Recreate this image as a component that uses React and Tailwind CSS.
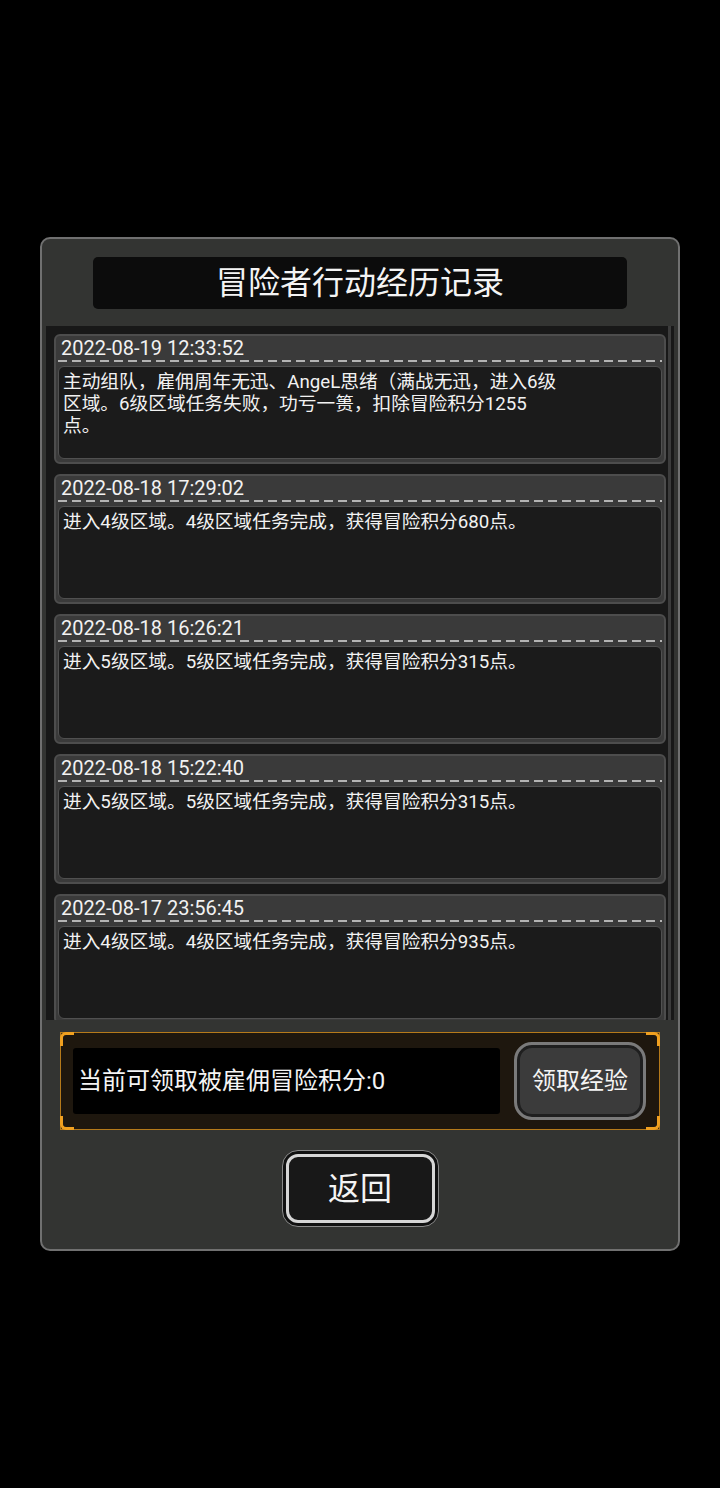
import React from "react";

const records = [
  {
    time: "2022-08-19 12:33:52",
    lines: [
      "主动组队，雇佣周年无迅、AngeL思绪（满战无迅，进入6级",
      "区域。6级区域任务失败，功亏一篑，扣除冒险积分1255",
      "点。",
    ],
  },
  { time: "2022-08-18 17:29:02", lines: ["进入4级区域。4级区域任务完成，获得冒险积分680点。"] },
  { time: "2022-08-18 16:26:21", lines: ["进入5级区域。5级区域任务完成，获得冒险积分315点。"] },
  { time: "2022-08-18 15:22:40", lines: ["进入5级区域。5级区域任务完成，获得冒险积分315点。"] },
  { time: "2022-08-17 23:56:45", lines: ["进入4级区域。4级区域任务完成，获得冒险积分935点。"] },
];

function RecordCard({ rec }) {
  return (
    <div className="shrink-0 h-[130px] rounded-[6px] border-2 border-[#4d4d4d] bg-[#3a3a3a] flex flex-col">
      <div className="h-[24px] pl-[5px] text-[20px] leading-[24px] text-[#f2f2f2]">{rec.time}</div>
      <div className="mx-[2px] h-[2px] bg-[repeating-linear-gradient(to_right,#b4b4b4_0_9px,transparent_9px_14px)]" />
      <div className="mt-[4px] mx-[2px] h-[93px] rounded-[6px] border border-[#505050] bg-[#1b1b1b] pl-[4px] pt-[4px] text-[18.7px] leading-[22px] text-[#f2f2f2]">
        {rec.lines.map((l, i) => (
          <div key={i} className="whitespace-nowrap">{l}</div>
        ))}
      </div>
    </div>
  );
}

function Corner({ pos }) {
  const cls = {
    tl: "top-[-1px] left-[-1px] border-l-[3px] border-t-[3px] rounded-tl-[6px]",
    tr: "top-[-1px] right-[-1px] border-r-[3px] border-t-[3px] rounded-tr-[6px]",
    bl: "bottom-[-1px] left-[-1px] border-l-[3px] border-b-[3px] rounded-bl-[6px]",
    br: "bottom-[-1px] right-[-1px] border-r-[3px] border-b-[3px] rounded-br-[6px]",
  }[pos];
  return <span className={"absolute w-[14px] h-[14px] border-[#f0a020] " + cls} />;
}

export default function App() {
  return (
    <div
      className="w-full h-[1488px] bg-black pt-[237px] px-[40px]"
      style={{ fontFamily: 'Roboto, "Noto Sans CJK SC", sans-serif' }}
    >
      <div className="h-[1014px] rounded-[10px] border-2 border-[#707070] bg-[#333432] flex flex-col">
        {/* title */}
        <div className="mt-[18px] mx-[51px] h-[52px] rounded-[5px] bg-[#0c0c0c] flex items-center justify-center text-[32px] text-[#f4f4f4]">
          冒险者行动经历记录
        </div>

        {/* record list */}
        <div className="mt-[17px] mx-[4px] h-[694px] bg-[#181818] overflow-hidden flex">
          <div className="flex-1 pl-[8px] pr-[2px] pt-[8px] flex flex-col gap-[10px] overflow-hidden">
            {records.map((r, i) => (
              <RecordCard key={i} rec={r} />
            ))}
          </div>
          <div className="w-[3px] mr-[3px] bg-[#3c3c3c]" />
        </div>

        {/* claim box */}
        <div className="relative mt-[12px] mx-[18px] h-[98px] border border-[#b67a1a] bg-[#1e170e] flex items-center pl-[12px] pr-[13px]">
          <Corner pos="tl" />
          <Corner pos="tr" />
          <Corner pos="bl" />
          <Corner pos="br" />
          <div className="w-[427px] h-[66px] rounded-[3px] bg-black flex items-center pl-[5px] text-[24px] text-[#f4f4f4]">
            当前可领取被雇佣冒险积分:0
          </div>
          <div className="ml-auto w-[132px] h-[78px] rounded-[18px] border-[3px] border-[#7a7a7a] bg-[#3b3b3b] shadow-[inset_0_0_0_3px_#1f1f1f] flex items-center justify-center text-[24px] text-[#f4f4f4]">
            领取经验
          </div>
        </div>

        {/* back button */}
        <div className="mt-[20px] flex justify-center">
          <div className="w-[157px] h-[77px] rounded-[16px] border border-[#8a8a8a] bg-[#111] p-[3px]">
            <div className="h-full rounded-[12px] border-[3px] border-[#d6d6d6] bg-[#181818] flex items-center justify-center text-[32px] text-[#f4f4f4]">
              返回
            </div>
          </div>
        </div>
      </div>
    </div>
  );
}
